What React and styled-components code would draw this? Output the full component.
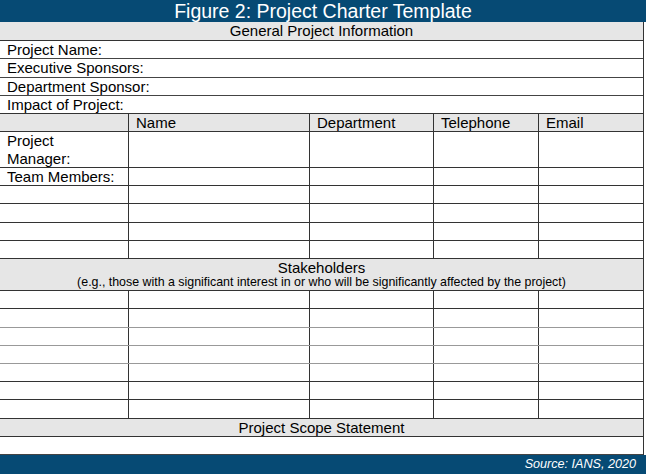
import styled, { createGlobalStyle } from "styled-components";

const GlobalStyle = createGlobalStyle`
  html, body {
    margin: 0;
    padding: 0;
    background: #ffffff;
  }
  body {
    font-family: "Liberation Sans", Arial, sans-serif;
    color: #000000;
  }
`;

const COLS = "129px 181px 124px 105px 105px";

const generalRows = [
  { label: "Project Name:", h: 18 },
  { label: "Executive Sponsors:", h: 19 },
  { label: "Department Sponsor:", h: 18 },
  { label: "Impact of Project:", h: 18 },
];

const contactHeaders = ["", "Name", "Department", "Telephone", "Email"];

const teamRows = [
  { label: "Project\nManager:", h: 36 },
  { label: "Team Members:", h: 18 },
  { label: "", h: 18 },
  { label: "", h: 19 },
  { label: "", h: 18 },
  { label: "", h: 18 },
];

const stakeholderRows = [
  { h: 18, line: "#333" },
  { h: 19, line: "#999" },
  { h: 18, line: "#999" },
  { h: 18, line: "#999" },
  { h: 18, line: "#333" },
  { h: 18, line: "#333" },
  { h: 19, line: "#333" },
];

export default function App() {
  return (
    <>
      <GlobalStyle />
      <Page>
        <TitleBar>Figure 2: Project Charter Template</TitleBar>
        <Sheet>
          <SectionHead $h={19}>General Project Information</SectionHead>
          {generalRows.map((r) => (
            <LabelRow key={r.label} $h={r.h}>{r.label}</LabelRow>
          ))}

          <GridRow $h={19} $shade>
            {contactHeaders.map((c, i) => (
              <Cell key={i}>{c}</Cell>
            ))}
          </GridRow>
          {teamRows.map((r, i) => (
            <GridRow key={i} $h={r.h}>
              <Cell>{r.label}</Cell>
              <Cell />
              <Cell />
              <Cell />
              <Cell />
            </GridRow>
          ))}

          <StakeHead>
            <span>Stakeholders</span>
            <Note>(e.g., those with a significant interest in or who will be significantly affected by the project)</Note>
          </StakeHead>
          {stakeholderRows.map((r, i) => (
            <GridRow key={i} $h={r.h} $line={r.line}>
              <Cell />
              <Cell />
              <Cell />
              <Cell />
              <Cell />
            </GridRow>
          ))}

          <SectionHead $h={18}>Project Scope Statement</SectionHead>
          <LabelRow $h={18} />
        </Sheet>
        <FooterBar>Source: IANS, 2020</FooterBar>
      </Page>
    </>
  );
}

const Page = styled.div`
  width: 646px;
  height: 474px;
  display: flex;
  flex-direction: column;
  overflow: hidden;
`;

const TitleBar = styled.div`
  height: 22px;
  background: #064a74;
  color: #ffffff;
  font-size: 19.5px;
  line-height: 22px;
  text-align: center;
  flex-shrink: 0;
`;

const Sheet = styled.div`
  width: 644px;
  box-sizing: border-box;
  border-right: 1px solid #333;
  display: flex;
  flex-direction: column;
`;

const SectionHead = styled.div`
  height: ${(p) => p.$h}px;
  box-sizing: border-box;
  background: #e6e6e6;
  border-bottom: 1px solid #333;
  font-size: 15px;
  line-height: 18px;
  text-align: center;
`;

const LabelRow = styled.div`
  height: ${(p) => p.$h}px;
  box-sizing: border-box;
  border-bottom: 1px solid #444;
  padding-left: 7px;
  font-size: 15px;
  line-height: 17px;
`;

const GridRow = styled.div`
  height: ${(p) => p.$h}px;
  box-sizing: border-box;
  display: grid;
  grid-template-columns: ${COLS};
  background: ${(p) => (p.$shade ? "#e6e6e6" : "#ffffff")};
  border-bottom: 1px solid ${(p) => p.$line || "#333"};
  border-top: ${(p) => (p.$shade ? "1px solid #333" : "none")};
  margin-top: ${(p) => (p.$shade ? "-1px" : "0")};
`;

const Cell = styled.div`
  box-sizing: border-box;
  border-right: 1px solid #333;
  padding-left: 7px;
  font-size: 15px;
  line-height: 17.5px;
  white-space: pre-line;
  &:last-child {
    border-right: none;
  }
`;

const StakeHead = styled.div`
  height: 32px;
  box-sizing: border-box;
  background: #e6e6e6;
  border-bottom: 1px solid #333;
  display: flex;
  flex-direction: column;
  align-items: center;
  font-size: 15px;
  line-height: 17px;
`;

const Note = styled.span`
  font-size: 12.4px;
  line-height: 13px;
`;

const FooterBar = styled.div`
  flex: 1;
  background: #064a74;
  color: #ffffff;
  font-size: 12.6px;
  font-style: italic;
  line-height: 18px;
  text-align: right;
  padding-right: 10px;
`;
